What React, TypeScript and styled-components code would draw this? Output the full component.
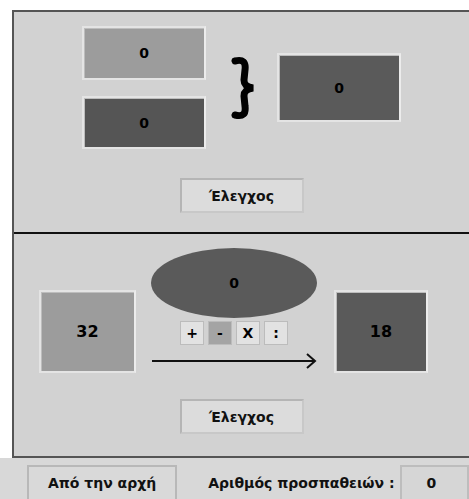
import React from "react";
import styled, { createGlobalStyle } from "styled-components";

const Global = createGlobalStyle`
  html, body { margin: 0; padding: 0; background: #ffffff; overflow: hidden; }
  body { font-family: "DejaVu Sans", "Liberation Sans", sans-serif; }
`;

const Page = styled.div`
  width: 469px;
  height: 499px;
  overflow: hidden;
  display: flex;
  flex-direction: column;
  padding-top: 10px;
  box-sizing: border-box;
`;

const Frame = styled.div`
  margin-left: 12px;
  width: 460px;
  flex: none;
  border: 2px solid #555;
  border-right: none;
  box-sizing: border-box;
  background: #d2d2d2;
`;

const Section = styled.div<{ $h: number; $sep?: boolean }>`
  height: ${(p) => p.$h}px;
  box-sizing: border-box;
  padding-top: 14px;
  padding-right: 3px;
  display: flex;
  flex-direction: column;
  align-items: center;
  border-bottom: ${(p) => (p.$sep ? "2px solid #111" : "none")};
`;

const TopRow = styled.div`
  display: flex;
  align-items: center;
`;

const Column = styled.div`
  display: flex;
  flex-direction: column;
  gap: 16px;
`;

const ValueBox = styled.div<{ $w: number; $h: number; $bg: string }>`
  width: ${(p) => p.$w}px;
  height: ${(p) => p.$h}px;
  box-sizing: border-box;
  background: ${(p) => p.$bg};
  border: 2px solid #e4e4e4;
  border-right-color: #ececec;
  box-shadow: inset 1px 1px 0 #bdbdbd;
  display: flex;
  align-items: center;
  justify-content: center;
  font-weight: bold;
  font-size: 14px;
  color: #000;
`;

const BigValue = styled(ValueBox)`
  font-size: 16px;
`;

const BraceSvg = styled.svg`
  display: block;
  margin-left: 25px;
  margin-right: 21px;
  flex: none;
`;

const CheckButton = styled.div<{ $mt: number }>`
  margin-top: ${(p) => p.$mt}px;
  width: 124px;
  height: 35px;
  box-sizing: border-box;
  background: #dcdcdc;
  border: 2px solid #b5b5b5;
  border-right-color: #c8c8c8;
  border-bottom-color: #c8c8c8;
  display: flex;
  align-items: center;
  justify-content: center;
  font-weight: bold;
  font-size: 14px;
  color: #111;
`;

const BottomRow = styled.div`
  align-self: flex-start;
  display: flex;
  align-items: flex-start;
  padding-left: 25px;
`;

const Square = styled(BigValue)`
  margin-top: 42px;
`;

const Middle = styled.div`
  width: 166px;
  margin: 0 17px 0 15px;
  display: flex;
  flex-direction: column;
  align-items: center;
`;

const Ellipse = styled.div`
  width: 166px;
  height: 70px;
  border-radius: 50%;
  background: #5a5a5a;
  display: flex;
  align-items: center;
  justify-content: center;
  font-weight: bold;
  font-size: 14px;
  color: #000;
`;

const Ops = styled.div`
  margin-top: 3px;
  display: flex;
  gap: 4px;
`;

const Op = styled.div<{ $active?: boolean }>`
  width: 24px;
  height: 24px;
  box-sizing: border-box;
  background: ${(p) => (p.$active ? "#a4a4a4" : "#e2e2e2")};
  border: 1px solid #bcbcbc;
  display: flex;
  align-items: center;
  justify-content: center;
  font-weight: bold;
  font-size: 14px;
  color: #000;
`;

const ArrowSvg = styled.svg`
  display: block;
  margin-top: 8px;
`;

const Footer = styled.div`
  flex: 1;
  background: #d8d8d8;
  display: flex;
  align-items: flex-start;
  padding: 7px 0 0 27px;
  box-sizing: border-box;
`;

const FooterButton = styled.div`
  width: 152px;
  height: 36px;
  box-sizing: border-box;
  background: #d9d9d9;
  border: 2px solid #b8b8b8;
  display: flex;
  align-items: center;
  justify-content: center;
  font-weight: bold;
  font-size: 14px;
  color: #111;
`;

const Label = styled.div`
  margin-left: 31px;
  height: 36px;
  display: flex;
  align-items: center;
  font-weight: bold;
  font-size: 14px;
  color: #111;
  width: 194px;
`;

const Counter = styled.div`
  width: 70px;
  height: 36px;
  box-sizing: border-box;
  background: #d6d6d6;
  border: 2px solid #bdbdbd;
  display: flex;
  align-items: center;
  justify-content: center;
  padding-right: 6px;
  font-weight: bold;
  font-size: 14px;
  color: #111;
`;

export default function App() {
  return (
    <>
      <Global />
      <Page>
        <Frame>
          <Section $h={222} $sep>
            <TopRow>
              <Column>
                <ValueBox $w={124} $h={54} $bg="#9c9c9c">0</ValueBox>
                <ValueBox $w={124} $h={53} $bg="#555555">0</ValueBox>
              </Column>
              <BraceSvg width="25" height="64" viewBox="0 0 25 64">
                <path
                  d="M4 5 C 12 3, 15 6, 14 14 L 13 24 C 13 29, 16 31, 22 32 C 16 33, 13 35, 13 40 L 14 50 C 15 58, 12 61, 4 59"
                  fill="none"
                  stroke="#000"
                  strokeWidth="7"
                  strokeLinecap="round"
                  strokeLinejoin="miter"
                />
              </BraceSvg>
              <ValueBox $w={124} $h={69} $bg="#5a5a5a">0</ValueBox>
            </TopRow>
            <CheckButton $mt={29}>Έλεγχος</CheckButton>
          </Section>
          <Section $h={222}>
            <BottomRow>
              <Square $w={97} $h={83} $bg="#9c9c9c">32</Square>
              <Middle>
                <Ellipse>0</Ellipse>
                <Ops>
                  <Op>+</Op>
                  <Op $active>-</Op>
                  <Op>X</Op>
                  <Op>:</Op>
                </Ops>
                <ArrowSvg width="166" height="16" viewBox="0 0 166 16">
                  <line x1="1" y1="8" x2="164" y2="8" stroke="#111" strokeWidth="2" />
                  <polyline points="156,1 164,8 156,15" fill="none" stroke="#111" strokeWidth="2" />
                </ArrowSvg>
              </Middle>
              <Square $w={94} $h={83} $bg="#5a5a5a">18</Square>
            </BottomRow>
            <CheckButton $mt={26}>Έλεγχος</CheckButton>
          </Section>
        </Frame>
        <Footer>
          <FooterButton>Από την αρχή</FooterButton>
          <Label>Αριθμός προσπαθειών :</Label>
          <Counter>0</Counter>
        </Footer>
      </Page>
    </>
  );
}
